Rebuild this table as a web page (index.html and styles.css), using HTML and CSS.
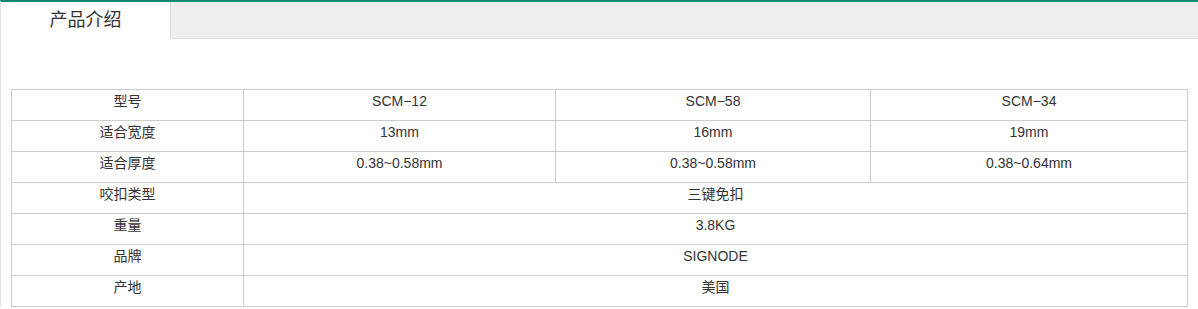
FILE: index.html
```html
<!DOCTYPE html>
<html lang="zh-CN">
<head>
<meta charset="utf-8">
<title>产品介绍</title>
<link rel="stylesheet" href="styles.css">
</head>
<body>
<div class="panel">
  <div class="tabs">
    <div class="tab active">产品介绍</div>
    <div class="tab-rest"></div>
  </div>
  <div class="content">
    <table class="spec">
      <colgroup>
        <col class="c1"><col class="c2"><col class="c3"><col class="c4">
      </colgroup>
      <tr><td>型号</td><td>SCM−12</td><td>SCM−58</td><td>SCM−34</td></tr>
      <tr><td>适合宽度</td><td>13mm</td><td>16mm</td><td>19mm</td></tr>
      <tr><td>适合厚度</td><td>0.38~0.58mm</td><td>0.38~0.58mm</td><td>0.38~0.64mm</td></tr>
      <tr><td>咬扣类型</td><td colspan="3">三键免扣</td></tr>
      <tr><td>重量</td><td colspan="3">3.8KG</td></tr>
      <tr><td>品牌</td><td colspan="3">SIGNODE</td></tr>
      <tr><td>产地</td><td colspan="3">美国</td></tr>
    </table>
  </div>
</div>
</body>
</html>
```

FILE: styles.css
```css
html, body {
  margin: 0;
  padding: 0;
  background: #fff;
}
body {
  font-family: "Liberation Sans", "Noto Sans CJK SC", sans-serif;
  color: #333;
}
.panel {
  border-top: 2px solid #0b8a70;
  border-left: 1px solid #e3e3e3;
  min-height: 307px;
  box-sizing: border-box;
}
.tabs {
  display: flex;
}
.tab {
  width: 169px;
  height: 36px;
  line-height: 36px;
  text-align: center;
  font-size: 18px;
  background: #fff;
}
.tab-rest {
  flex: 1;
  height: 36px;
  background: #eeeeee;
  border-left: 1px solid #dddddd;
  border-bottom: 1px solid #dddddd;
}
.content {
  padding: 50px 10px 0 10px;
}
.spec {
  width: 1177px;
  border-collapse: collapse;
  table-layout: fixed;
  font-size: 14px;
}
.spec .c1 { width: 232px; }
.spec .c2 { width: 312px; }
.spec .c3 { width: 315px; }
.spec td {
  border: 1px solid #cccccc;
  height: 31px;
  padding: 0;
  line-height: 22px;
  vertical-align: top;
  text-align: center;
  box-sizing: border-box;
}
```
